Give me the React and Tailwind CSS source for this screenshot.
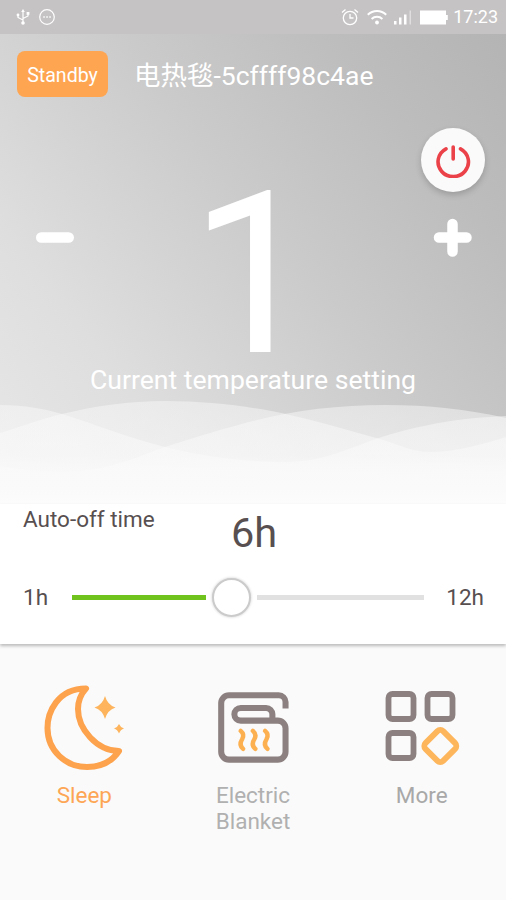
const StatusBar = () => (
  <div className="flex h-[34px] items-center bg-[#c6c3c4] px-2 text-white">
    <svg className="ml-[7px] h-[18px] w-4" viewBox="0 0 16 18" fill="none" stroke="currentColor" strokeWidth="1.2">
      <path d="M8 3v12M8 12 3 9.5V7M8 10.5l5-2.5V5.500" />
      <path d="M6.200 4 8 1l1.800 3z" fill="currentColor" stroke="none" />
      <circle cx="8" cy="15" r="1.800" fill="currentColor" stroke="none" />
      <circle cx="3" cy="7" r="1.400" fill="currentColor" stroke="none" />
      <path d="M11.600 4h2.800v2.800h-2.800z" fill="currentColor" stroke="none" />
    </svg>
    <svg className="ml-2 h-[18px] w-4" viewBox="0 0 16 18" fill="none" stroke="currentColor" strokeWidth="1.2">
      <circle cx="8" cy="9" r="7.300" />
      <path d="M4.300 9h1.500M7.300 9h1.500M10.300 9h1.500" strokeWidth="1.500" />
    </svg>

    <div className="ml-auto flex items-center">
      <svg className="h-[18px] w-[18px]" viewBox="0 0 18 18" fill="none" stroke="currentColor" strokeWidth="1.300">
        <circle cx="9" cy="10" r="6.700" />
        <path d="M9 6v4h3.500M1 4.500 4.500 1.500M17 4.500l-3.500-3" />
      </svg>
      <svg className="ml-2 h-[18px] w-5" viewBox="0 0 20 18" fill="none" stroke="currentColor" strokeWidth="2">
        <path d="M.8 6.800a13 13 0 0 1 18.400 0M4.600 11a7.800 7.800 0 0 1 10.800 0" />
        <circle cx="10" cy="14.500" r="1.900" fill="currentColor" stroke="none" />
      </svg>
      <svg className="ml-[7px] h-[18px] w-[18px]" viewBox="0 0 18 18" fill="currentColor">
        <path d="M0 13h2.500v3.500H0zM5 9.500h2.500v7H5zM10 6.500h2.500v10H10z" />
        <path d="M15.500 2.500h1.500v14h-1.500z" opacity=".45" />
      </svg>
      <svg className="ml-2 h-[18px] w-7" viewBox="0 0 28 18" fill="currentColor">
        <path d="M0 2.500h26v4.500h1.800v5H26v4.500H0z" />
      </svg>
      <span className="ml-[5px] text-[18px] leading-none">17:23</span>
    </div>
  </div>
);

const Waves = () => (
  <svg className="block h-[106px] w-full" viewBox="0 0 506 106" preserveAspectRatio="none">
    <defs>
      <linearGradient id="wave" gradientUnits="userSpaceOnUse" x1="0" y1="0" x2="0" y2="106">
        <stop offset="0" stopColor="#fafafa" stopOpacity=".46" />
        <stop offset=".55" stopColor="#fafafa" stopOpacity=".56" />
        <stop offset=".85" stopColor="#fafafa" stopOpacity=".9" />
        <stop offset="1" stopColor="#fcfcfc" stopOpacity="1" />
      </linearGradient>
    </defs>
    <path fill="url(#wave)" d="M0 7C25 7 45 11 62 16C95 26 125 39 165 49C205 59 245 64 285 64C325 64 350 49 385 38C425 26 460 20 506 18V106H0z" />
    <path fill="url(#wave)" d="M0 35C20 29 40 21 62 16C95 8 130 3 165 3C210 3 255 9 290 17C325 25 350 33 380 41C400 47 412 54 430 54C455 54 480 47 506 39V106H0z" />
    <path fill="url(#wave)" d="M0 68C20 72 60 76 90 72C120 67 140 58 165 49C190 41 215 33 253 23C295 12 340 7 385 7C430 7 465 11 506 20V106H0z" />
  </svg>
);

const Hero = () => (
  <section className="flex h-[470px] flex-col bg-[linear-gradient(52deg,#e8e8e8_0%,#dedede_25%,#cbcbcb_55%,#bdbdbd_80%,#b4b4b4_100%)] text-white">
    <div className="flex items-center px-[17px] pt-[17px]">
      <button className="h-[46px] w-[91px] rounded-lg bg-[#fea552] pt-[3px] text-[19.600px]">Standby</button>
      <h1 className="ml-[26px] mt-[3px] h-[43px] whitespace-nowrap text-[26.500px] leading-[44px]">
        电热毯-5cffff98c4ae
      </h1>
    </div>

    <div className="flex justify-end pr-[21px] pt-[31px]">
      <button className="flex h-16 w-16 items-center justify-center rounded-full bg-[#fafafa] shadow-[0_3px_6px_rgba(0,0,0,0.18)]">
        <svg className="h-9 w-9" viewBox="0 0 36 36" fill="none" stroke="#ea4248" strokeWidth="3.600" strokeLinecap="round">
          <path d="M11 6.800a15.200 14.800 0 1 0 14.500 0" />
          <path d="M18.200 5v12" />
        </svg>
      </button>
    </div>

    <div className="flex h-[171px] items-start justify-between px-[34px]">
      <button className="mt-[25px]">
        <svg className="h-10 w-10" viewBox="0 0 40 40" stroke="#fff" strokeWidth="10.500" strokeLinecap="round">
          <path d="M7.200 20.500h27.500" />
        </svg>
      </button>
      <div className="ml-px mt-[3px] text-[226px] leading-[160px]">1</div>
      <button className="mt-[25px]">
        <svg className="h-10 w-10" viewBox="0 0 40 40" stroke="#fff" strokeWidth="10.500" strokeLinecap="round">
          <path d="M7 20.500h27.500M20.500 7v27.500" />
        </svg>
      </button>
    </div>

    <p className="h-[35px] text-center text-[26.600px] leading-[33px]">Current temperature setting</p>
    <Waves />
  </section>
);

const AutoOff = () => (
  <section className="relative h-[140px] bg-white px-[23px] shadow-[0_2px_3px_rgba(0,0,0,0.25)]">
    <div className="grid grid-cols-3 text-[#574f50]">
      <span className="whitespace-nowrap pt-px text-[22.500px] leading-[28px]">Auto-off time</span>
      <span className="pl-[2px] pt-[5px] text-center text-[41.500px] leading-[48px]">6h</span>
    </div>
    <div className="mt-5 flex h-10 items-center text-[22.500px] text-[#574f50]">
      <span className="w-[49px] pt-[2px]">1h</span>
      <div className="h-[5px] w-[134px] bg-[#70c21d]" />
      <div className="mx-[6px] h-[39px] w-[39px] rounded-full border-2 border-[#cbcbcb] bg-white shadow-[0_0_3px_rgba(0,0,0,0.2)]" />
      <div className="h-[5px] w-[167px] bg-[#e1e1e1]" />
      <span className="-mr-px ml-auto pt-[2px]">12h</span>
    </div>
  </section>
);

const SleepIcon = () => (
  <svg className="h-[90px] w-[90px]" viewBox="0 0 90 90" fill="none">
    <path
      d="M46 8.500C17 8.500 7.500 33 7.500 48C7.500 71 26 87 47 87C63 87 73 80 79 71C57 71 38 49 38 29C38 21 41 14 46 8.500z"
      stroke="#fda24d"
      strokeWidth="6"
      strokeLinejoin="round"
      transform="translate(1 -3)"
    />
    <path d="M66 13Q68.500 22 76.500 24.500Q68.500 27 66 36Q63.500 27 55.500 24.500Q63.500 22 66 13z" fill="#fdb45c" />
    <path d="M80 41Q81.500 44.500 85 45.500Q81.500 46.500 80 50.500Q78.500 46.500 75 45.500Q78.500 44.500 80 41z" fill="#fdb45c" />
  </svg>
);

const BlanketIcon = () => (
  <svg className="h-[90px] w-[90px]" viewBox="0 0 90 90" fill="none" strokeWidth="6.200">
    <g transform="translate(1.500 -.4) scale(.975)">
      <path
        d="M78 26.500V20a7 7 0 0 0-7-7H20a8 8 0 0 0-8 8v50a8 8 0 0 0 8 8h50a8 8 0 0 0 8-8V47a8 8 0 0 0-8-8H32a6.500 6.500 0 0 1 0-13h26a6.500 6.500 0 0 1 6.500 6.500V37"
        stroke="#8c8180"
      />
      <g stroke="#fdb04f" strokeWidth="4.600" strokeLinecap="round">
        <path d="M32 49.500c3 2.500 3.500 5 1.500 8.500c-2.500 4-2.500 7 1 10" />
        <path d="M44.500 49.500c3 2.500 3.500 5 1.500 8.500c-2.500 4-2.500 7 1 10" />
        <path d="M57 49.500c3 2.500 3.500 5 1.500 8.500c-2.500 4-2.500 7 1 10" />
      </g>
    </g>
  </svg>
);

const MoreIcon = () => (
  <svg className="h-[90px] w-[90px]" viewBox="0 0 90 90" fill="none" stroke="#8c8180" strokeWidth="5.800">
    <rect x="11.500" y="11" width="25" height="25" rx="4" />
    <rect x="50.500" y="11" width="25" height="25" rx="4" />
    <rect x="11.500" y="50" width="25" height="25" rx="4" />
    <rect x="50.800" y="50.500" width="25" height="25" rx="4" transform="rotate(45 63.300 63)" stroke="#fdb65c" />
  </svg>
);

const modes = [
  { label: 'Sleep', icon: <SleepIcon />, color: 'text-[#fda655]' },
  { label: 'Electric Blanket', icon: <BlanketIcon />, color: 'text-[#b0b0b0]' },
  { label: 'More', icon: <MoreIcon />, color: 'text-[#a8a8a8]' },
];

export default function App() {
  return (
    <div className="h-[900px] w-[506px] overflow-hidden bg-[#fafafa] font-['Roboto','Noto_Sans_CJK_SC',sans-serif]">
      <StatusBar />
      <Hero />
      <AutoOff />
      <nav className="grid grid-cols-3 pt-[39px]">
        {modes.map((mode) => (
          <button key={mode.label} className={`flex flex-col items-center ${mode.color}`}>
            {mode.icon}
            <span className="mt-[9px] w-20 text-[22.500px] leading-[26px]">{mode.label}</span>
          </button>
        ))}
      </nav>
    </div>
  );
}
